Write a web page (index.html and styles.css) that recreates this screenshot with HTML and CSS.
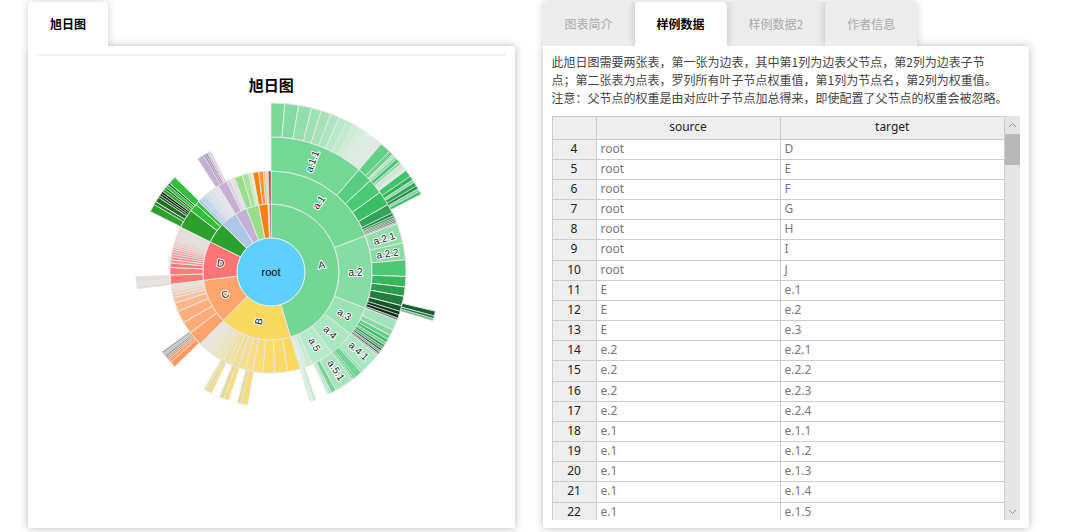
FILE: index.html
```html
<!DOCTYPE html>
<html lang="zh-CN">
<head>
<meta charset="utf-8">
<meta name="viewport" content="width=device-width, initial-scale=1">
<title>旭日图</title>
<link rel="stylesheet" href="styles.css">
</head>
<body>
<main class="page">
  <section class="pane">
    <nav class="tabs"><button class="tab tab-active" type="button">旭日图</button></nav>
    <div class="card chart-card">
      <hr class="rule">
      <h1 class="title">旭日图</h1>
      <svg class="sunburst" id="sunburst" viewBox="-170 -170 340 340" role="img" aria-label="旭日图"></svg>
    </div>
  </section>
  <section class="pane">
    <nav class="tabs">
      <button class="tab" type="button">图表简介</button>
      <button class="tab tab-active" type="button">样例数据</button>
      <button class="tab" type="button">样例数据2</button>
      <button class="tab" type="button">作者信息</button>
    </nav>
    <div class="card data-card">
      <p class="intro">此旭日图需要两张表，第一张为边表，其中第1列为边表父节点，第2列为边表子节<br>点；第二张表为点表，罗列所有叶子节点权重值，第1列为节点名，第2列为权重值。<br>注意：父节点的权重是由对应叶子节点加总得来，即使配置了父节点的权重会被忽略。</p>
      <div class="grid">
        <table class="sheet">
          <colgroup><col class="col-index"><col class="col-source"><col></colgroup>
          <thead><tr><th></th><th>source</th><th>target</th></tr></thead>
          <tbody>
            <tr><th>4</th><td>root</td><td>D</td></tr>
            <tr><th>5</th><td>root</td><td>E</td></tr>
            <tr><th>6</th><td>root</td><td>F</td></tr>
            <tr><th>7</th><td>root</td><td>G</td></tr>
            <tr><th>8</th><td>root</td><td>H</td></tr>
            <tr><th>9</th><td>root</td><td>I</td></tr>
            <tr><th>10</th><td>root</td><td>J</td></tr>
            <tr><th>11</th><td>E</td><td>e.1</td></tr>
            <tr><th>12</th><td>E</td><td>e.2</td></tr>
            <tr><th>13</th><td>E</td><td>e.3</td></tr>
            <tr><th>14</th><td>e.2</td><td>e.2.1</td></tr>
            <tr><th>15</th><td>e.2</td><td>e.2.2</td></tr>
            <tr><th>16</th><td>e.2</td><td>e.2.3</td></tr>
            <tr><th>17</th><td>e.2</td><td>e.2.4</td></tr>
            <tr><th>18</th><td>e.1</td><td>e.1.1</td></tr>
            <tr><th>19</th><td>e.1</td><td>e.1.2</td></tr>
            <tr><th>20</th><td>e.1</td><td>e.1.3</td></tr>
            <tr><th>21</th><td>e.1</td><td>e.1.4</td></tr>
            <tr><th>22</th><td>e.1</td><td>e.1.5</td></tr>
          </tbody>
        </table>
        <div class="scrollbar">
          <button class="arrow" type="button" aria-label="向上滚动"><svg width="9" height="6" viewBox="0 0 9 6"><path d="M1 5 4.500 1.500 8 5"/></svg></button>
          <div class="thumb"></div>
          <button class="arrow arrow-down" type="button" aria-label="向下滚动"><svg width="9" height="6" viewBox="0 0 9 6"><path d="M1 1 4.500 4.500 8 1"/></svg></button>
        </div>
      </div>
    </div>
  </section>
</main>
<script src="chart.js"></script>
</body>
</html>
```
FILE: styles.css
```css
* { box-sizing: border-box; }
body {
  margin: 0;
  background: #fff;
  font-family: "Noto Sans", "Noto Sans CJK SC", sans-serif;
  font-size: 12px;
  color: #444;
}
.page {
  display: grid;
  grid-template-columns: 1fr 1fr;
  grid-template-rows: minmax(0, 1fr);
  gap: 28px;
  height: 100vh;
  padding: 2px 51px 4px 28px;
}
.pane { display: flex; flex-direction: column; min-height: 0; }
.tabs { display: flex; flex: none; height: 44px; }
.tab {
  padding: 0 22px 2px;
  border: 0;
  border-radius: 4px 4px 0 0;
  background: #ececec;
  color: #aaa;
  font: 12px "Noto Sans CJK SC", sans-serif;
  box-shadow: 0 0 8px rgba(0, 0, 0, .2);
  clip-path: inset(-8px -8px 0 -8px);
}
.tab-active {
  position: relative;
  z-index: 2;
  background: #fff;
  color: #000;
  font-weight: 700;
}
.card {
  flex: 1;
  min-height: 0;
  padding: 8px 9px;
  border-radius: 0 2px 2px 2px;
  background: #fff;
  box-shadow: 0 0 8px rgba(0, 0, 0, .28);
}
.chart-card { display: flex; flex-direction: column; align-items: center; }
.data-card { display: flex; flex-direction: column; }
.rule { flex: none; width: 100%; height: 2px; margin: 0; border: 0; background: #f2f2f2; }
.title {
  margin: 17px 0 5px;
  font: 700 15px/24px "Noto Sans CJK SC", sans-serif;
  color: #000;
}
.sunburst { flex: none; width: 340px; height: 340px; }
.slice { stroke: #e5e7e3; stroke-width: 1; }
.slice-thin { stroke-opacity: .6; }
.hub { fill: #5fcfff; stroke: #e0eef3; }
.label {
  font: 10px "Liberation Sans", Arial, sans-serif;
  fill: #222;
  stroke: #fff;
  stroke-width: 2px;
  paint-order: stroke;
  text-anchor: middle;
  dominant-baseline: central;
}
.label-root { font-size: 11px; fill: #000; stroke: none; }
.intro {
  margin: 0 0 9px;
  line-height: 18px;
  font-family: "Noto Sans CJK SC", sans-serif;
  white-space: nowrap;
}
.data-card { padding-top: 7px; }
.grid { display: flex; flex: 1; min-height: 0; overflow: hidden; }
.sheet {
  flex: 1;
  align-self: flex-start;
  table-layout: fixed;
  border-collapse: collapse;
  line-height: 16px;
}
.col-index { width: 44px; }
.col-source { width: 184px; }
.sheet th, .sheet td { height: 20px; padding: 0 4px 2px; border: 1px solid #ccc; }
.sheet th { background: #eee; color: #222; font-weight: 400; text-align: center; }
.sheet td { color: #777; }
.sheet thead th { height: 23px; }
.sheet tbody tr:nth-child(6n) td { height: 21px; }
.scrollbar { display: flex; flex-direction: column; width: 15px; background: #e5e5e5; }
.arrow { display: grid; place-items: center; height: 18px; padding: 0; border: 0; background: none; }
.arrow path { fill: none; stroke: #999; stroke-width: 1; }
.thumb { height: 31px; background: #b8b8b8; }
.arrow-down { margin-top: auto; height: 16px; }
```
FILE: chart.js
```js
const svg = document.getElementById('sunburst');
const NS = 'http://www.w3.org/2000/svg';
const radii = [0, 34, 68, 101, 135, 169];

function point(radius, angle) {
  const a = angle * Math.PI / 180;
  return (radius * Math.sin(a)).toFixed(2) + ' ' + (-radius * Math.cos(a)).toFixed(2);
}

function slice(ring, start, end, color) {
  const inner = radii[ring], outer = radii[ring + 1];
  const large = end - start > 180 ? 1 : 0;
  const path = document.createElementNS(NS, 'path');
  path.setAttribute('d', `M${point(inner, start)}L${point(outer, start)}A${outer} ${outer} 0 ${large} 1 ${point(outer, end)}L${point(inner, end)}A${inner} ${inner} 0 ${large} 0 ${point(inner, start)}Z`);
  path.setAttribute('class', end - start < 1.6 ? 'slice slice-thin' : 'slice');
  path.setAttribute('fill', color);
  svg.append(path);
}

// Each row: ring, start angle, then pairs of end angle and colour.
const rows = [
  [1, 0, 163.3, '#72d794', 224.5, '#fad75d', 263, '#ffa56e', 296.4, '#ff7474', 314.3, '#2ca02c', 328.5, '#aec7e8', 338.8, '#c5b0d5', 349.6, '#98df8a', 357.5, '#ff7f0e', 358.7, '#ffd0aa', 360, '#a64b50'],
  [2, 0, 69, '#74d895', 111, '#83dda4', 128, '#99e3b5', 143, '#a8e7c0', 156, '#b4eac9', 159, '#c2edd2', 161, '#d2f1dd', 163.3, '#def3e5'],
  [2, 163.3, 170.4, '#fbd75e', 178, '#fbd965', 184.6, '#f9da6a', 190.4, '#f8dc76', 194.8, '#f7de83', 199, '#f4df91', 202.5, '#f4df91', 205.5, '#f3e099', 208, '#f1dfa1', 210.5, '#f2e2ac', 212.5, '#f0e2b3', 214.5, '#eee2bc', 216.5, '#ede5c5', 218, '#ece5cb', 219.5, '#ebe5d1', 221, '#e9e4d5', 222.5, '#e8e5da', 224.5, '#e5e4df'],
  [2, 224.5, 233, '#ffa46d', 240, '#ffac79', 247, '#ffad7b', 252, '#fdb68b', 255, '#f9bf9b', 257, '#f5c8ae', 259, '#f1d0bb', 260.5, '#eed7c8', 262, '#ebded5', 263, '#e8e2dc'],
  [2, 263, 268.3, '#ff7777', 272.6, '#ff7b7b', 275.2, '#ff7878', 277, '#ff8a8a', 278.7, '#fb8989', 280.2, '#f99292', 281.6, '#f69b9b', 283, '#f5a5a5', 284.3, '#f4afaf', 285.6, '#f1b9b9', 287, '#efc4c4', 288.5, '#ebcccc', 290, '#ebd5d5', 292, '#e8dada', 296.4, '#e3dfdf'],
  [2, 296.4, 307.5, '#2ca02c', 312, '#2fbe35', 314.3, '#32c13a', 316, '#abc8eb', 317.5, '#b9cff0', 319, '#b9cdf0', 320.5, '#cbd9ef', 322, '#d0dbed', 325, '#dce2ec', 328.5, '#e4e6ed', 334, '#c5b0d5', 336, '#dacfdf', 338.8, '#e6e1e9', 343.5, '#98df8a', 347, '#a4e297', 348.3, '#c3e9bc', 349.6, '#dceedd', 353, '#ff7f0e', 355.6, '#ff9133', 357, '#ffb77d', 358.5, '#ecd1bb', 360, '#a6484f'],
  [3, 0, 40.7, '#74d895', 47.4, '#57ce7e', 53.8, '#48cb73', 60, '#38bf64', 64, '#32a457', 65.3, '#238648', 66.3, '#33a65a', 66.9, '#155c31', 67.6, '#62796b', 68.3, '#5b6a61', 69, '#a9b5ae', 77.6, '#92dfad', 84.8, '#85dca4', 91.9, '#4bc977', 96.4, '#38b760', 100.4, '#2b9d50', 104.5, '#217d40', 107, '#14592c', 108.5, '#10391e', 110, '#092f1b', 111, '#748078'],
  [3, 111, 115.5, '#a0e4b9', 118, '#83dba3', 120, '#62d188', 121.5, '#3cbe68', 122.7, '#78cc96', 123.8, '#269a51', 124.8, '#5ea87a', 125.7, '#1c6b38', 126.5, '#93a69a', 127.2, '#34473b', 128, '#a6bcae', 137, '#a6e8bf', 138, '#8cddab', 141.2, '#70d492', 142, '#4cc076', 143, '#8cddab', 151.2, '#a4e6be', 153.4, '#72d697', 154.2, '#a4dfb9', 155.2, '#c5ead1'],
  [3, 160.6, 161.7, '#c5e9d2', 163.3, '#dcefe4'],
  [3, 190, 192.5, '#f8dc73', 193.3, '#edd476', 194.4, '#e7d592'],
  [3, 198.3, 200.5, '#f8dc75', 202.4, '#e8d993'],
  [3, 206.2, 207.5, '#f6dd80', 208.5, '#e8d37e', 209.7, '#eddfa7'],
  [3, 225.4, 228, '#ff9860', 229.4, '#ff9e6a', 230.2, '#dc9069', 231, '#b7a294', 231.9, '#999', 232.8, '#bbb', 233.8, '#aaa'],
  [3, 262.8, 264.3, '#e4dddd', 265.7, '#e8e0e0', 268, '#e5dede'],
  [3, 296.6, 300, '#2ca02c', 301.4, '#26862b', 303.6, '#216d25', 304.6, '#185c20', 305.6, '#102c18', 306.6, '#0a2210', 308, '#2cac33', 308.8, '#144d19', 310.3, '#3bc542', 311.2, '#1c5923', 314.6, '#31c139'],
  [3, 327, 330, '#c5b0d5', 331, '#aa94bb', 331.8, '#9a89ab', 332.6, '#c9bad3', 333.6, '#ded6e3'],
  [4, 0, 4.7, '#7ad898', 9.4, '#83dba3', 13.9, '#92dfad', 17.3, '#9ce2b5', 20.7, '#a5e2b9', 23.8, '#ade5c0', 26.7, '#b7e8c8', 29.4, '#c0ebce', 31.5, '#caeed5', 33.3, '#d2efdb', 35, '#d7efdf', 36.5, '#dceee3', 37.8, '#deeae2', 39, '#e1eae4', 40.7, '#e2e8e4'],
  [4, 40.7, 44.5, '#61d188', 46, '#72cf91', 47, '#b5e6c5', 48, '#8dddaa', 49.3, '#4bc575', 50.3, '#8fdbaa', 52, '#cce9d6', 53, '#daeee0', 55.5, '#3fc56c', 57, '#2fb45d', 58, '#8ad8a7', 59.4, '#2ca955', 60.5, '#258b49', 61.5, '#82d39f', 62.6, '#44bd70'],
  [4, 103.4, 105.1, '#185e31', 106, '#247c43', 106.8, '#80af91']
];

for (const [ring, start, ...rest] of rows) {
  let from = start;
  for (let i = 0; i < rest.length; i += 2) {
    slice(ring, from, rest[i], rest[i + 1]);
    from = rest[i];
  }
}

const hub = document.createElementNS(NS, 'circle');
hub.setAttribute('r', radii[1]);
hub.setAttribute('class', 'hub');
svg.append(hub);

function label(text, ring, angle) {
  const el = document.createElementNS(NS, 'text');
  const radius = ring ? (radii[ring] + radii[ring + 1]) / 2 : 0;
  const turn = ring ? (angle > 180 ? angle - 270 : angle - 90) : 0;
  el.setAttribute('class', ring ? 'label' : 'label label-root');
  el.setAttribute('transform', `translate(${point(radius, angle)}) rotate(${turn})`);
  el.textContent = text;
  svg.append(el);
}

[['root', 0, 0], ['A', 1, 82], ['B', 1, 194], ['C', 1, 244], ['D', 1, 280],
 ['a.1', 2, 34.5], ['a.2', 2, 90], ['a.3', 2, 120], ['a.4', 2, 135.5], ['a.5', 2, 149],
 ['a.1.1', 3, 20.5], ['a.2.1', 3, 73.5], ['a.2.2', 3, 81], ['a.4.1', 3, 132], ['a.5.1', 3, 146.5]
].forEach(item => label(...item));
```
